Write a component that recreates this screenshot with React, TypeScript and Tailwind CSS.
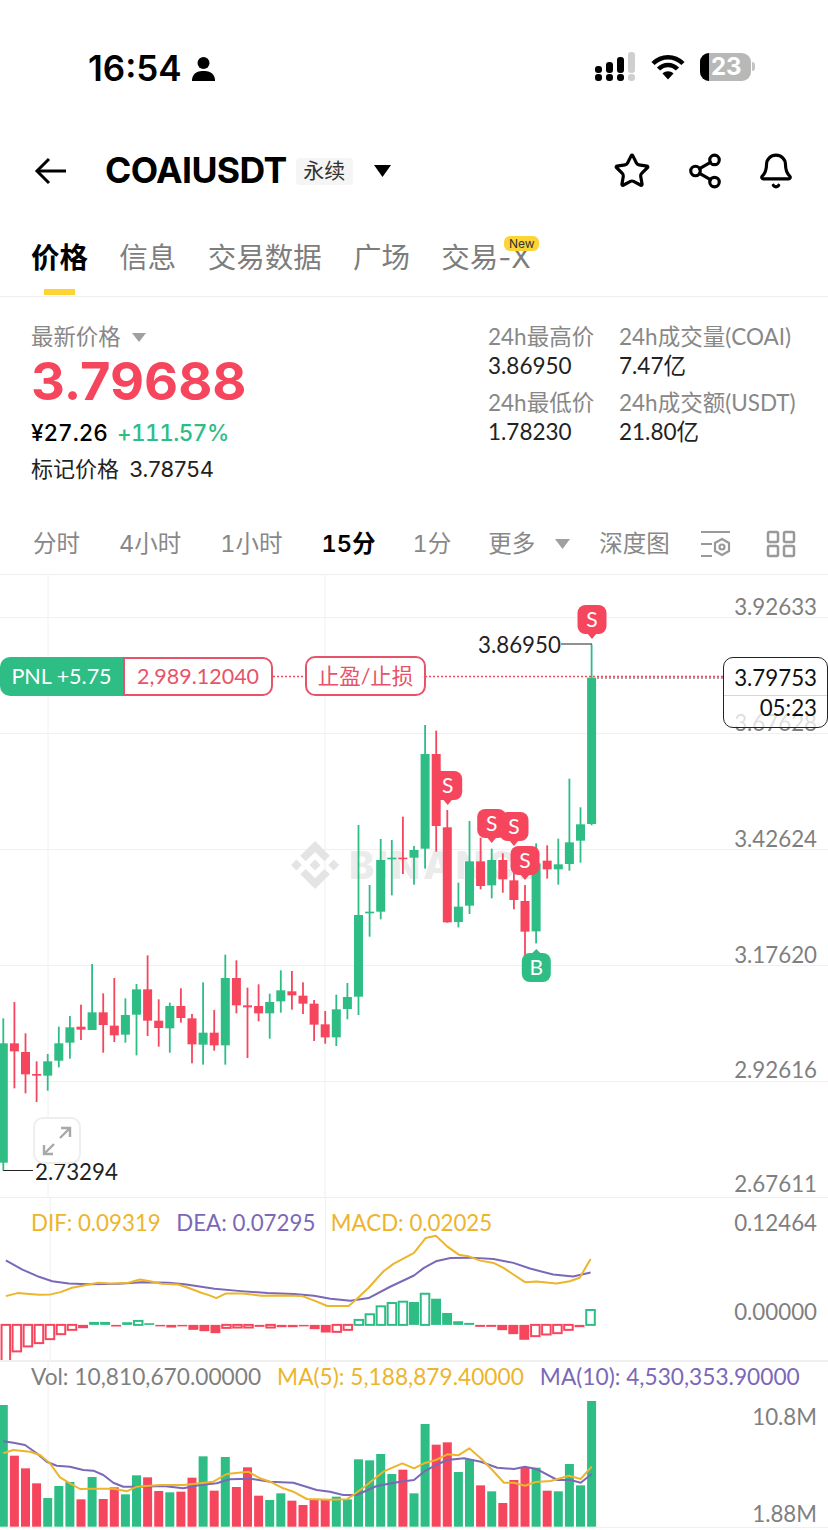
import { Bell, Share2, Star } from "lucide-react";

type Candle = ["g" | "r", number, number, number, number];

// values read off the reference: wick top, wick bottom, body top, body bottom
const leftCandles: Candle[] = [
  ["g", 355, 812, 430, 788],
  ["r", 306, 565, 430, 454],
  ["r", 400, 580, 456, 523],
  ["r", 484, 606, 522, 527],
  ["g", 462, 572, 484, 527],
  ["g", 380, 502, 430, 482],
  ["g", 348, 476, 382, 428],
  ["r", 314, 420, 380, 389],
  ["g", 192, 390, 337, 390],
  ["r", 280, 458, 337, 375],
  ["r", 234, 426, 377, 406],
  ["g", 295, 428, 345, 404],
  ["g", 252, 466, 268, 344],
  ["r", 166, 408, 268, 362],
  ["r", 298, 440, 362, 384],
  ["g", 308, 458, 318, 385],
  ["r", 265, 368, 318, 354],
  ["r", 342, 490, 355, 433],
  ["g", 247, 494, 398, 434],
  ["r", 330, 452, 398, 436],
  ["g", 164, 494, 234, 436],
  ["r", 181, 340, 234, 316],
  ["r", 263, 474, 316, 322],
  ["r", 253, 364, 318, 340],
  ["g", 281, 416, 306, 340],
  ["g", 211, 338, 271, 304],
  ["r", 213, 329, 274, 286],
  ["r", 247, 342, 287, 311],
  ["r", 300, 423, 311, 374],
  ["r", 333, 431, 373, 412],
  ["g", 284, 438, 328, 412],
  ["g", 249, 358, 291, 327],
];

const rightCandles: Candle[] = [
  ["g", 705, 1275, 975, 1220],
  ["g", 885, 1040, 965, 970],
  ["g", 747, 988, 810, 965],
  ["g", 750, 916, 803, 808],
  ["r", 680, 852, 803, 806],
  ["g", 768, 884, 780, 803],
  ["g", 405, 836, 492, 776],
  ["r", 422, 785, 492, 708],
  ["r", 660, 998, 712, 997],
  ["g", 878, 1012, 950, 996],
  ["g", 693, 972, 814, 947],
  ["r", 743, 898, 814, 888],
  ["g", 776, 925, 810, 886],
  ["r", 790, 908, 810, 868],
  ["r", 840, 958, 871, 930],
  ["r", 885, 1100, 933, 1025],
  ["g", 760, 1060, 820, 1024],
  ["r", 766, 866, 812, 838],
  ["g", 746, 884, 823, 838],
  ["g", 566, 842, 757, 822],
  ["g", 652, 818, 703, 752],
  ["g", 163, 706, 263, 702],
];

const candles: Candle[] = [
  ...leftCandles.map((c): Candle => [c[0], 900 + c[1] / 3, 900 + c[2] / 3, 900 + c[3] / 3, 900 + c[4] / 3]),
  ...rightCandles.map((c): Candle => [c[0], 590 + c[1] / 3, 590 + c[2] / 3, 590 + c[3] / 3, 590 + c[4] / 3]),
];

const GREEN = "#2ebd85";
const RED = "#f6465d";
const YELLOW = "#ecb52b";
const PURPLE = "#7b68b8";

const cx = (i: number) => 3.3 + 11.1 * i;

// [end of bar, hollow]
const macdBars: [number, boolean][] = [
  [487, true], [457, true], [442, true], [432, true], [420, true], [405, true], [392, true], [387, false],
  [368, false], [368, false], [382, false], [369, false], [365, true], [372, false], [381, false], [385, false],
  [381, false], [392, false], [396, false], [402, false], [386, true], [385, true], [385, true], [383, false],
  [385, true], [384, false], [384, false], [381, false], [390, false], [400, false], [398, true], [392, true],
  [362, true], [345, true], [321, true], [311, true], [307, true], [308, false], [283, true], [298, false],
  [341, false], [366, false], [371, false], [383, false], [383, false], [393, false], [405, false], [422, false],
  [411, true], [406, true], [402, true], [392, true], [384, false], [332, true],
];

const volColors = "grrrgggrgrrggrrgrrgrgrrrggrrrrggggggrggrrggrgrrrgrgggg".split("");
const volTops = [
  615, 767, 805, 850, 894, 858, 846, 898, 831, 897, 862, 883, 826, 832, 873, 877, 875, 833, 769, 872, 771, 861, 802,
  887, 900, 880, 902, 915, 900, 900, 890, 898, 778, 781, 762, 822, 809, 880, 672, 734, 727, 816, 778, 856, 874, 909,
  840, 803, 803, 872, 874, 792, 856, 603,
];

const line = (left: number[][], right: number[][], oy: number) =>
  [...left.map(([u, v]) => [u / 3, oy + v / 3]), ...right.map(([u, v]) => [138 * 3 + u / 3, oy + v / 3])]
    .map(([x, y]) => `${x.toFixed(1)},${y.toFixed(1)}`)
    .join(" ");

const dif = line(
  [[10, 290], [45, 281], [110, 286], [145, 285], [175, 278], [210, 265], [260, 255], [290, 250], [325, 252], [380, 250], [415, 240], [445, 245], [480, 253], [530, 255], [560, 265], [600, 280], [625, 288], [645, 296], [675, 282], [725, 282], [780, 289], [850, 288], [905, 290], [945, 305], [980, 320], [1045, 320], [1070, 298], [1105, 265], [1150, 215], [1180, 193], [1242, 160]],
  [[35, 115], [66, 108], [100, 140], [135, 165], [165, 170], [200, 183], [240, 190], [270, 205], [300, 225], [335, 248], [370, 246], [430, 252], [470, 245], [500, 235], [533, 178]],
  1200,
);
const dea = line(
  [[10, 182], [60, 210], [110, 232], [150, 245], [200, 252], [260, 254], [350, 253], [420, 248], [500, 250], [550, 254], [640, 268], [720, 275], [800, 281], [880, 284], [940, 289], [990, 298], [1050, 304], [1105, 296], [1170, 262], [1242, 228]],
  [[30, 205], [66, 185], [110, 175], [170, 174], [240, 178], [300, 190], [350, 207], [420, 225], [480, 231], [533, 219]],
  1200,
);
const ma5 = line(
  [[10, 760], [40, 750], [90, 755], [120, 765], [150, 790], [180, 832], [210, 850], [240, 867], [280, 866], [340, 866], [380, 874], [410, 860], [480, 855], [550, 855], [600, 850], [640, 845], [680, 822], [745, 815], [780, 835], [810, 845], [850, 865], [880, 875], [920, 897], [990, 899], [1040, 898], [1060, 885], [1100, 855], [1150, 815], [1207, 790], [1242, 805]],
  [[30, 790], [66, 780], [100, 763], [133, 766], [166, 745], [200, 775], [235, 810], [270, 848], [300, 848], [333, 857], [365, 846], [410, 843], [465, 827], [500, 837], [533, 800]],
  1200,
);
const ma10 = line(
  [[10, 724], [40, 728], [75, 735], [110, 760], [140, 785], [170, 797], [210, 800], [250, 810], [280, 812], [310, 825], [340, 848], [370, 860], [420, 860], [490, 858], [550, 865], [600, 855], [650, 850], [690, 838], [750, 836], [810, 845], [880, 848], [950, 870], [990, 875], [1030, 885], [1070, 885], [1130, 858], [1200, 845], [1242, 840]],
  [[30, 815], [66, 795], [100, 780], [150, 775], [200, 785], [250, 803], [300, 807], [333, 800], [370, 808], [430, 840], [470, 840], [500, 848], [533, 822]],
  1200,
);

function Marker({ x, top, label, up }: { x: number; top: number; label: string; up?: boolean }) {
  const fill = up ? GREEN : RED;
  return (
    <g>
      <rect x={x - 14.5} y={top} width={29} height={29} rx={8} fill={fill} />
      {up ? (
        <path d={`M${x - 5} ${top + 1} L${x} ${top - 4} L${x + 5} ${top + 1}Z`} fill={fill} />
      ) : (
        <path d={`M${x - 5} ${top + 28} L${x} ${top + 34} L${x + 5} ${top + 28}Z`} fill={fill} />
      )}
      <text x={x} y={top + 22} textAnchor="middle" fontSize={21} fill="#fff" fontFamily="Lato, sans-serif">
        {label}
      </text>
    </g>
  );
}

function VerticalGrid({ y0, y1 }: { y0: number; y1: number }) {
  return (
    <>
      <line x1={48} x2={48} y1={y0} y2={y1} stroke="#f0f0f0" strokeWidth={1} />
      <line x1={325} x2={325} y1={y0} y2={y1} stroke="#f0f0f0" strokeWidth={1} />
    </>
  );
}

function MainChart() {
  return (
    <svg className="absolute inset-0 h-full w-full" viewBox="0 575 828 622">
      <VerticalGrid y0={575} y1={1197} />
      {[617.5, 733.5, 849.5, 965.5, 1081.5].map((y) => (
        <line key={y} x1={0} x2={828} y1={y} y2={y} stroke="#f0f0f0" strokeWidth={1} />
      ))}
      <g transform="translate(291 841) scale(0.38)" fill="#e4e4e4">
        <path d="M38.73 53.2 63.3 28.63l24.58 24.58 14.3-14.3L63.3 0 24.43 38.87zM0 63.31l14.3-14.3 14.3 14.3-14.3 14.3zM38.73 73.41 63.3 97.98l24.58-24.58 14.3 14.29-.01.01L63.3 126.61 24.43 87.74l-.02-.02zM98.01 63.31l14.3-14.3 14.3 14.3-14.3 14.3zM77.81 63.3 63.3 48.78 52.59 59.5l-1.23 1.23-2.54 2.54 14.48 14.48 14.51-14.52z" />
      </g>
      <text x={349} y={879} fontSize={38} fontWeight={800} fill="#ebebeb" letterSpacing={3} fontFamily="Inter, sans-serif">
        BINANCE
      </text>
      <line x1={273} x2={724} y1={676.5} y2={676.5} stroke={RED} strokeWidth={1.5} strokeDasharray="2 2" />
      <line x1={597} x2={724} y1={678} y2={678} stroke="#555" strokeWidth={1} strokeDasharray="2 2" />
      {candles.map((c, i) => {
        const color = c[0] === "g" ? GREEN : RED;
        const x = cx(i);
        return (
          <g key={i}>
            <rect x={x - 0.9} y={c[1]} width={1.8} height={c[2] - c[1]} fill={color} />
            <rect x={x - 4.5} y={c[3]} width={9} height={Math.max(c[4] - c[3], 1.5)} fill={color} />
          </g>
        );
      })}
      <polyline points="561,644 592,644" fill="none" stroke="#222" strokeWidth={1} />
      <polyline points="3.3,1170.5 33,1170.5" fill="none" stroke="#222" strokeWidth={1} />
      <Marker x={592} top={605} label="S" />
      <Marker x={447.7} top={771} label="S" />
      <Marker x={491.7} top={809} label="S" />
      <Marker x={514} top={812} label="S" />
      <Marker x={525} top={846} label="S" />
      <Marker x={536.3} top={953} label="B" up />
    </svg>
  );
}

function MacdChart() {
  const zero = 1200 + 377 / 3;
  return (
    <svg className="absolute inset-0 h-full w-full" viewBox="0 1198 828 163">
      <VerticalGrid y0={1198} y1={1361} />
      {macdBars.map(([end, hollow], i) => {
        const y = 1200 + end / 3;
        const top = Math.min(zero, y);
        const h = Math.max(Math.abs(zero - y), 1.5);
        const color = end < 377 ? GREEN : RED;
        const x = cx(i);
        return hollow ? (
          <rect key={i} x={x - 4.3} y={top} width={8.6} height={h} fill="#fff" stroke={color} strokeWidth={2} />
        ) : (
          <rect key={i} x={x - 5} y={top} width={10} height={h} fill={color} />
        );
      })}
      <polyline points={dea} fill="none" stroke={PURPLE} strokeWidth={2} strokeLinejoin="round" />
      <polyline points={dif} fill="none" stroke={YELLOW} strokeWidth={2} strokeLinejoin="round" />
    </svg>
  );
}

function VolumeChart() {
  return (
    <svg className="absolute inset-0 h-full w-full" viewBox="0 1362 828 168">
      <VerticalGrid y0={1362} y1={1527} />
      <line x1={0} x2={828} y1={1527.5} y2={1527.5} stroke="#f0f0f0" strokeWidth={1} />
      {volTops.map((v, i) => {
        const y = 1200 + v / 3;
        return (
          <rect
            key={i}
            x={cx(i) - 4.5}
            y={y}
            width={9}
            height={1526.7 - y}
            fill={volColors[i] === "g" ? GREEN : RED}
          />
        );
      })}
      <polyline points={ma10} fill="none" stroke={PURPLE} strokeWidth={2} strokeLinejoin="round" />
      <polyline points={ma5} fill="none" stroke={YELLOW} strokeWidth={2} strokeLinejoin="round" />
    </svg>
  );
}

function Axis({ className, children }: { className: string; children: string }) {
  return <span className={`absolute right-[11px] text-[22.3px] leading-6 text-[#7f7f7f] ${className}`}>{children}</span>;
}

function StatusBar() {
  return (
    <div className="flex h-[130px] items-start justify-between pl-[88px] pr-[73px] pt-[46px]">
      <div className="flex items-center gap-[9px]">
        <span className="text-[35px] font-semibold leading-[44px] text-black">16:54</span>
        <svg width="25" height="25" viewBox="0 0 25 25" fill="#000">
          <circle cx="12.5" cy="7" r="6" />
          <path d="M1 25c0-1 0-3 1-5 2-4 6-5 10.500-5s8.500 1 10.500 5c1 2 1 4 1 5z" />
        </svg>
      </div>
      <div className="flex items-center gap-[15px] pt-[6px]">
        <svg width="42" height="29" viewBox="0 0 42 29" fill="#000">
          <rect x="1" y="14" width="7" height="7" rx="3" />
          <rect x="1" y="22" width="7" height="7" rx="3" />
          <rect x="12" y="10" width="7" height="11" rx="3" />
          <rect x="12" y="22" width="7" height="7" rx="3" />
          <rect x="23" y="5" width="7" height="16" rx="3" />
          <rect x="23" y="22" width="7" height="7" rx="3" />
          <rect x="34" y="0" width="7" height="21" rx="3" fill="#cfcfcf" />
          <rect x="34" y="22" width="7" height="7" rx="3" fill="#cfcfcf" />
        </svg>
        <svg width="34" height="26" viewBox="0 0 34 26" fill="none" stroke="#000" strokeWidth="4.500">
          <path d="M2 9.500C10.500 1 23.500 1 32 9.500" />
          <path d="M7.500 15C13 9.500 21 9.500 26.500 15" />
          <path d="M17 25.500 11.500 19.500C14.500 16.500 19.500 16.500 22.500 19.500Z" fill="#000" stroke="none" />
        </svg>
        <div className="flex items-center">
          <div className="relative flex h-[28px] w-[51px] items-center overflow-hidden rounded-[9px] bg-[#b8b8b8] pl-[11px]">
            <div className="absolute inset-y-0 left-0 w-[9px] bg-black" />
            <span className="text-[24px] font-bold leading-none text-white">23</span>
          </div>
          <div className="ml-[1px] h-[9px] w-[3px] rounded-r bg-[#c4c4c4]" />
        </div>
      </div>
    </div>
  );
}

function Header() {
  return (
    <div className="flex h-[82px] items-center pl-[34px] pr-[33px]">
      <svg width="34" height="28" viewBox="0 0 34 28" fill="none" stroke="#000" strokeWidth="3">
        <path d="M32 14H3" />
        <path d="M15 2 3 14l12 12" />
      </svg>
      <span className="ml-[37px] text-[35.6px] font-bold leading-none tracking-[-0.6px] text-black">COAIUSDT</span>
      <span className="ml-[9px] flex h-[27px] w-[57px] items-center justify-center rounded bg-[#f5f5f5] text-[21px] text-[#333]">
        永续
      </span>
      <svg className="ml-[21px]" width="17" height="12" viewBox="0 0 17 12" fill="#000">
        <path d="M0 0h17l-8.500 12z" />
      </svg>
      <div className="ml-auto flex items-center">
        <Star size={38} strokeWidth={2} color="#000" />
        <Share2 className="ml-[35px]" size={38} strokeWidth={2} color="#000" />
        <Bell className="ml-[33px]" size={38} strokeWidth={2} color="#000" />
      </div>
    </div>
  );
}

function Tabs() {
  return (
    <div className="relative flex h-[85px] items-start gap-[31.300px] border-b border-[#eeeeee] pl-[31px] pt-[25px] text-[28.5px] leading-[42px] text-[#7d7d7d]">
      <div className="relative font-semibold text-black">
        价格
        <div className="absolute left-[13px] top-[52px] h-[6px] w-[31px] bg-[#fcd535]" />
      </div>
      <span>信息</span>
      <span>交易数据</span>
      <span>广场</span>
      <div className="relative">
        交易-X
        <span className="absolute left-[63px] top-[-1px] flex h-[15px] w-[35px] items-center justify-center rounded-[6px] bg-[#fcd535] text-[12px] leading-none text-[#333]">
          New
        </span>
      </div>
    </div>
  );
}

function Ticker() {
  return (
    <div className="flex h-[218px] items-start pl-[31px] pt-[25px]">
      <div className="w-[457px]">
        <div className="flex h-[30px] items-center gap-[11px] text-[22.400px] leading-[30px] text-[#888888]">
          最新价格
          <svg width="14" height="9" viewBox="0 0 14 9" fill="#a0a0a0">
            <path d="M0 0h14l-7 9z" />
          </svg>
        </div>
        <div className="h-[56px] pt-[1px] text-[52.500px] font-bold leading-[56px] text-[#f6465d]">3.79688</div>
        <div className="mt-[10px] flex gap-[9px] text-[22.500px] font-medium leading-[30px] tabular-nums">
          <span className="text-black">¥27.26</span>
          <span className="tracking-[-0.5px] text-[#2ebd85]">+111.57%</span>
        </div>
        <div className="mt-[6px] text-[22px] leading-[30px] text-[#222222]">
          标记价格 <span className="ml-[4px]">3.78754</span>
        </div>
      </div>
      <div className="grid grid-cols-[131px_auto] gap-y-[8px] font-['Lato','Noto_Sans_CJK_SC',sans-serif] text-[22.500px] leading-[29px]">
        <div>
          <div className="text-[#888888]">24h最高价</div>
          <div className="text-[#222222]">3.86950</div>
        </div>
        <div>
          <div className="text-[#888888]">24h成交量(COAI)</div>
          <div className="text-[#222222]">7.47亿</div>
        </div>
        <div>
          <div className="text-[#888888]">24h最低价</div>
          <div className="text-[#222222]">1.78230</div>
        </div>
        <div>
          <div className="text-[#888888]">24h成交额(USDT)</div>
          <div className="text-[#222222]">21.80亿</div>
        </div>
      </div>
    </div>
  );
}

function Intervals() {
  return (
    <div className="flex h-[60px] items-center border-b border-[#eeeeee] pb-[2px] pl-[33px] text-[23.5px] text-[#888888] tabular-nums">
      <div className="flex items-center gap-[39px]">
        <span>分时</span>
        <span>4小时</span>
        <span>1小时</span>
        <span className="font-semibold text-black">15分</span>
        <span className="-mx-[2px]">1分</span>
        <div className="flex items-center gap-[20px]">
          更多
          <svg width="15" height="10" viewBox="0 0 15 10" fill="#a0a0a0">
            <path d="M0 0h15l-7.500 10z" />
          </svg>
        </div>
      </div>
      <span className="ml-[29px]">深度图</span>
      <svg className="ml-[30px]" width="31" height="30" viewBox="0 0 31 30" fill="none" stroke="#999" strokeWidth="2.200">
        <path d="M1 3h29M1 15h11M1 27h11" />
        <path d="M22 10l7 4v8l-7 4-7-4v-8z" />
        <circle cx="22" cy="18" r="2.500" />
      </svg>
      <svg className="ml-[35px]" width="30" height="28" viewBox="0 0 30 28" fill="none" stroke="#999" strokeWidth="2.500">
        <rect x="2" y="2" width="10" height="10" rx="1.500" />
        <rect x="18" y="2" width="10" height="10" rx="1.500" />
        <rect x="2" y="16" width="10" height="10" rx="1.500" />
        <rect x="18" y="16" width="10" height="10" rx="1.500" />
      </svg>
    </div>
  );
}

export default function App() {
  return (
    <div className="flex h-[1530px] w-[828px] flex-col overflow-hidden bg-white font-['Inter','Noto_Sans_CJK_SC',sans-serif]">
      <StatusBar />
      <Header />
      <Tabs />
      <Ticker />
      <Intervals />
      <div className="flex flex-1 flex-col font-['Lato','Noto_Sans_CJK_SC',sans-serif]">
        <div className="relative h-[623px] border-b border-[#eeeeee]">
          <MainChart />
          <Axis className="top-[20px]">3.92633</Axis>
          <Axis className="top-[136px]">3.67628</Axis>
          <Axis className="top-[252px]">3.42624</Axis>
          <Axis className="top-[368px]">3.17620</Axis>
          <Axis className="top-[483px]">2.92616</Axis>
          <Axis className="top-[597px]">2.67611</Axis>
          <span className="absolute left-[478px] top-[58px] text-[22.3px] leading-6 text-[#222222]">3.86950</span>
          <span className="absolute left-[35px] top-[585px] text-[22.3px] leading-6 text-[#222222]">2.73294</span>
          <div className="absolute left-0 top-[82px] flex h-[39px] items-stretch text-[21.500px]">
            <div className="flex w-[123px] items-center justify-center rounded-l-[10px] bg-[#2ebd85] text-white">
              PNL +5.75
            </div>
            <div className="flex w-[150px] items-center justify-center rounded-r-[10px] border-2 border-[#e8536a] bg-white text-[#e8536a]">
              2,989.12040
            </div>
          </div>
          <div className="absolute left-[305px] top-[81px] flex h-[40px] w-[121px] items-center justify-center rounded-[10px] border-2 border-[#e8536a] bg-white text-[21.500px] text-[#e8536a]">
            止盈/止损
          </div>
          <div className="absolute left-[723px] top-[82px] flex h-[71px] w-[105px] flex-col items-end rounded-[10px] border border-[#222222] bg-white/75 pr-[10px] text-[22.3px] leading-[30px] text-[#111111]">
            <span className="mt-[5px]">3.79753</span>
            <div className="absolute inset-x-0 top-[37px] h-px bg-[#f8c6cd]" />
            <span>05:23</span>
          </div>
          <div className="absolute left-[33px] top-[542px] flex h-[47px] w-[48px] items-center justify-center rounded-[10px] border-2 border-[#eeeeee] bg-white">
            <svg width="30" height="30" viewBox="0 0 30 30" fill="none" stroke="#a8a8a8" strokeWidth="2.400">
              <path d="M18 12 28 2M19 2h9v9" />
              <path d="M12 18 2 28M2 19v9h9" />
            </svg>
          </div>
        </div>
        <div className="relative h-[164px] border-b-2 border-[#f0f0f0]">
          <MacdChart />
          <div className="relative flex gap-[15.500px] pl-[31px] pt-[13px] text-[22.300px] leading-6">
            <span className="text-[#ecb52b]">DIF: 0.09319</span>
            <span className="text-[#7b68b8]">DEA: 0.07295</span>
            <span className="text-[#ecb52b]">MACD: 0.02025</span>
          </div>
          <Axis className="top-[13px]">0.12464</Axis>
          <Axis className="top-[102px]">0.00000</Axis>
        </div>
        <div className="relative flex-1">
          <VolumeChart />
          <div className="relative flex gap-[16px] pl-[31px] pt-[3px] text-[22.700px] leading-6">
            <span className="text-[#7f7f7f]">Vol: 10,810,670.00000</span>
            <span className="text-[#ecb52b]">MA(5): 5,188,879.40000</span>
            <span className="text-[#7b68b8]">MA(10): 4,530,353.90000</span>
          </div>
          <Axis className="top-[43px]">10.8M</Axis>
          <Axis className="top-[140px]">1.88M</Axis>
        </div>
      </div>
    </div>
  );
}
